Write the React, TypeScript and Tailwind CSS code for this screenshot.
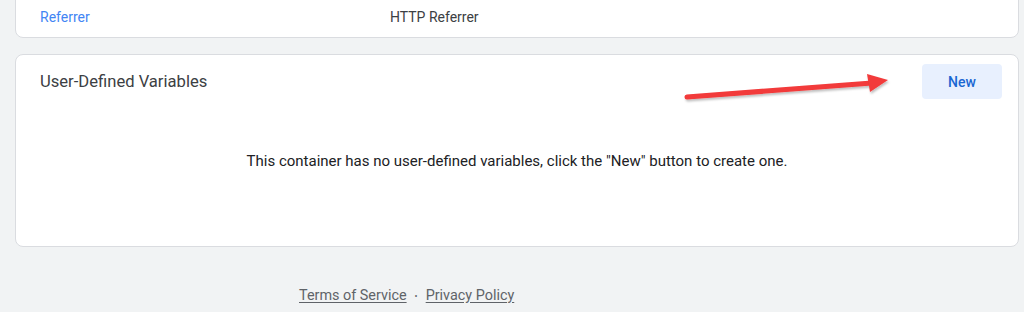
export default function App() {
  return (
    <div className="min-h-[312px] bg-[#f1f3f4] px-[15px] pr-[5px] font-['Roboto',sans-serif] text-sm overflow-hidden relative">
      {/* built-in variables card (scrolled off the top) */}
      <div className="-mt-[14px] bg-white border border-[#dadce0] rounded-lg">
        <div className="flex h-[50px] items-center pt-[10px] px-6">
          <span className="w-[350px] text-[#4285f4]">Referrer</span>
          <span className="text-[#3c4043]">HTTP Referrer</span>
        </div>
      </div>

      {/* user-defined variables */}
      <div className="mt-[16px] h-[193px] bg-white border border-[#dadce0] rounded-lg flex flex-col">
        <div className="flex items-start justify-between pl-6 pr-4 pt-[9px]">
          <h2 className="pt-[6px] text-[16.6px] text-[#3c4043] font-normal">User-Defined Variables</h2>
          <button className="w-[80px] h-[35px] rounded bg-[#e8f0fe] text-[#1967d2] font-medium text-sm">
            New
          </button>
        </div>
        <p className="mt-[52px] text-center text-[15px] text-[#202124]">
          This container has no user-defined variables, click the "New" button to create one.
        </p>
      </div>

      <div className="mt-[39px] pl-[284px] flex items-center gap-[8px] text-[14.4px] text-[#5f6368]">
        <a className="underline underline-offset-2">Terms of Service</a>
        <span className="text-[9px]">•</span>
        <a className="underline underline-offset-2">Privacy Policy</a>
      </div>

      {/* annotation arrow */}
      <svg className="absolute left-0 top-0 pointer-events-none" width="1024" height="312">
        <defs>
          <filter id="sh" x="-10%" y="-50%" width="120%" height="200%">
            <feDropShadow dx="1" dy="2" stdDeviation="1.2" floodColor="#000" floodOpacity="0.25" />
          </filter>
        </defs>
        <g filter="url(#sh)">
          <line x1="687" y1="97" x2="872" y2="83" stroke="#f23a3a" strokeWidth="5" strokeLinecap="round" />
          <polygon points="867,74 888,80 870,92" fill="#f23a3a" />
        </g>
      </svg>
    </div>
  )
}
